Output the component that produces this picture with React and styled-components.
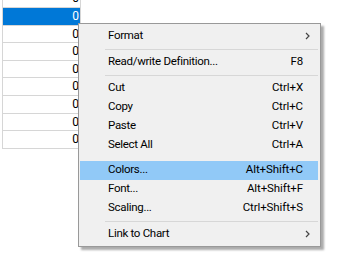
import React from "react";
import styled, { createGlobalStyle } from "styled-components";

const Global = createGlobalStyle`
  html, body { margin: 0; padding: 0; background: #fff; }
  body { width: 340px; height: 263px; overflow: hidden; font-family: "Roboto", "Noto Sans", sans-serif; }
`;

const Page = styled.div`
  position: relative;
  display: flow-root;
  width: 340px;
  height: 263px;
  background: #fff;
`;

const Grid = styled.div`
  margin-left: 2px;
  width: 78px;
  border-left: 1px solid #d6d6d6;
  display: flex;
  flex-direction: column;
`;

const Cell = styled.div`
  height: ${(p) => (p.$partial ? "7px" : "16.6px")};
  overflow: hidden;
  border-bottom: 1px solid #d6d6d6;
  border-right: 1px solid #d6d6d6;
  background: ${(p) => (p.$selected ? "#0078d7" : "#fff")};
  color: ${(p) => (p.$selected ? "#fff" : "#000")};
  font-family: "Roboto", "Noto Sans", sans-serif;
  font-size: 12px;
  line-height: 16.6px;
  text-align: right;
  padding-right: 1px;
  box-sizing: content-box;
`;

const Value = styled.div`
  margin-top: ${(p) => (p.$partial ? "-9.6px" : "0")};
`;

const Menu = styled.div`
  position: absolute;
  left: 78px;
  top: 23px;
  width: 238px;
  padding: 3px 2px 2px 1px;
  box-sizing: content-box;
  background: #f0f0f0;
  border: 1px solid #999;
  box-shadow: 3px 3px 2px rgba(0, 0, 0, 0.33);
  font-family: "Roboto", "Noto Sans", sans-serif;
  font-size: 11.5px;
  color: #000;
`;

const Item = styled.div`
  display: flex;
  align-items: center;
  box-sizing: border-box;
  height: 19px;
  padding: 0 8px 3px 28px;
  background: ${(p) => (p.$active ? "#91c9f7" : "transparent")};
`;

const Label = styled.span`
  flex: 1;
  white-space: nowrap;
  letter-spacing: -0.3px;
`;

const Shortcut = styled.span`
  white-space: nowrap;
  margin-right: 7px;
  letter-spacing: -0.1px;
`;

const ArrowBox = styled.span`
  width: 6px;
  display: flex;
  justify-content: center;
  align-items: center;
  padding-top: 2px;
`;

const Separator = styled.div`
  height: 7px;
  display: flex;
  align-items: center;
  padding-left: 25px;
  &::after {
    content: "";
    flex: 1;
    height: 1px;
    background: #d7d7d7;
  }
`;

const Spacer = styled.div`
  height: 6px;
`;

const Chevron = () => (
  <svg width="5" height="8" viewBox="0 0 5 8">
    <path d="M1 1 L4 4 L1 7" fill="none" stroke="#444" strokeWidth="1.2" />
  </svg>
);

const MenuItem = ({ label, shortcut, sub, active }) => (
  <Item $active={active}>
    <Label>{label}</Label>
    {shortcut && <Shortcut>{shortcut}</Shortcut>}
    {sub && (
      <ArrowBox>
        <Chevron />
      </ArrowBox>
    )}
  </Item>
);

export default function App() {
  const rows = Array.from({ length: 9 }, (_, i) => i);
  return (
    <Page>
      <Global />
      <Grid>
        {rows.map((i) => (
          <Cell key={i} $selected={i === 1} $partial={i === 0}>
            <Value $partial={i === 0}>0</Value>
          </Cell>
        ))}
      </Grid>
      <Menu>
        <MenuItem label="Format" sub />
        <Separator />
        <MenuItem label="Read/write Definition..." shortcut="F8" />
        <Separator />
        <MenuItem label="Cut" shortcut="Ctrl+X" />
        <MenuItem label="Copy" shortcut="Ctrl+C" />
        <MenuItem label="Paste" shortcut="Ctrl+V" />
        <MenuItem label="Select All" shortcut="Ctrl+A" />
        <Spacer />
        <MenuItem label="Colors..." shortcut="Alt+Shift+C" active />
        <MenuItem label="Font..." shortcut="Alt+Shift+F" />
        <MenuItem label="Scaling..." shortcut="Ctrl+Shift+S" />
        <Separator />
        <MenuItem label="Link to Chart" sub />
      </Menu>
    </Page>
  );
}
